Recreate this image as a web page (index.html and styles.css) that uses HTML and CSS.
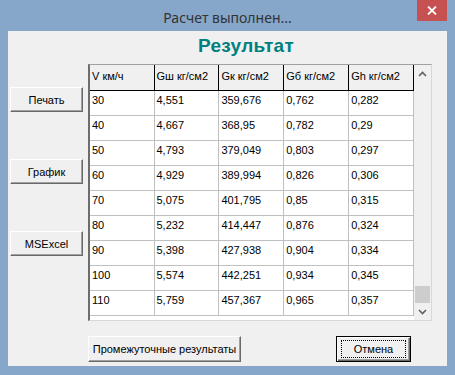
FILE: index.html
```html
<!DOCTYPE html>
<html lang="ru">

<head>
    <meta charset="UTF-8">
    <meta name="viewport" content="width=device-width, initial-scale=1.0">
    <title>Расчет выполнен...</title>
    <link rel="stylesheet" href="styles.css">
</head>

<body>
    <div class="window">
        <div class="titlebar">
            <span></span>
            <span class="title">Расчет выполнен...</span>
            <div class="close">
                <svg width="10" height="9" viewBox="0 0 10 9">
                    <path d="M1 0.5 L9 8.5 M9 0.5 L1 8.5" stroke="#fff" stroke-width="1.8" fill="none"/>
                </svg>
            </div>
        </div>

        <div class="client">
            <div class="heading">Результат</div>

            <div class="main">
                <div class="side-buttons">
                    <div class="btn side">Печать</div>
                    <div class="btn side">График</div>
                    <div class="btn side">MSExcel</div>
                </div>

                <div class="grid-box">
                    <table class="grid">
                        <thead>
                            <tr>
                                <th class="c1">V км/ч</th>
                                <th>Gш кг/см2</th>
                                <th>Gк кг/см2</th>
                                <th>Gб кг/см2</th>
                                <th>Gh кг/см2</th>
                            </tr>
                        </thead>
                        <tbody>
                            <tr><td>30</td><td>4,551</td><td>359,676</td><td>0,762</td><td>0,282</td></tr>
                            <tr><td>40</td><td>4,667</td><td>368,95</td><td>0,782</td><td>0,29</td></tr>
                            <tr><td>50</td><td>4,793</td><td>379,049</td><td>0,803</td><td>0,297</td></tr>
                            <tr><td>60</td><td>4,929</td><td>389,994</td><td>0,826</td><td>0,306</td></tr>
                            <tr><td>70</td><td>5,075</td><td>401,795</td><td>0,85</td><td>0,315</td></tr>
                            <tr><td>80</td><td>5,232</td><td>414,447</td><td>0,876</td><td>0,324</td></tr>
                            <tr><td>90</td><td>5,398</td><td>427,938</td><td>0,904</td><td>0,334</td></tr>
                            <tr><td>100</td><td>5,574</td><td>442,251</td><td>0,934</td><td>0,345</td></tr>
                            <tr><td>110</td><td>5,759</td><td>457,367</td><td>0,965</td><td>0,357</td></tr>
                        </tbody>
                    </table>

                    <div class="scrollbar">
                        <div class="arrow">
                            <svg width="9" height="6" viewBox="0 0 9 6">
                                <path d="M1 5 L4.5 1.5 L8 5" stroke="#606060" stroke-width="1.6" fill="none"/>
                            </svg>
                        </div>
                        <div class="track"><div class="thumb"></div></div>
                        <div class="arrow">
                            <svg width="9" height="6" viewBox="0 0 9 6">
                                <path d="M1 1 L4.5 4.5 L8 1" stroke="#606060" stroke-width="1.6" fill="none"/>
                            </svg>
                        </div>
                    </div>
                </div>
            </div>

            <div class="footer">
                <div class="btn wide">Промежуточные результаты</div>
                <div class="btn default"><span class="focus">Отмена</span></div>
            </div>
        </div>
    </div>
</body>

</html>
```

FILE: styles.css
```css
body {
    margin: 0;
    background-color: #86a7c9;
    font-family: "Liberation Sans", Arial, sans-serif;
}

.window {
    width: 455px;
    height: 375px;
}

.titlebar {
    display: grid;
    grid-template-columns: 1fr auto 1fr;
    height: 31px;
}

.title {
    font-family: "Noto Sans", sans-serif;
    font-size: 14px;
    color: #333;
    padding-top: 8px;
}

.close {
    justify-self: end;
    margin-right: 8px;
    width: 30px;
    height: 21px;
    background-color: #c75050;
    display: flex;
    align-items: center;
    justify-content: center;
}

.client {
    margin: 0 8px;
    height: 335px;
    background-color: #f0f0f0;
}

.heading {
    height: 33px;
    box-sizing: border-box;
    padding: 4px 0 0 37px;
    text-align: center;
    font-size: 19px;
    font-weight: bold;
    color: #008080;
    letter-spacing: 0.3px;
}

.main {
    display: flex;
}

.side-buttons {
    width: 80px;
    box-sizing: border-box;
    padding: 23px 0 0 2px;
    display: flex;
    flex-direction: column;
    gap: 47px;
}

.btn {
    box-sizing: border-box;
    background-color: #f0f0f0;
    border: 1px solid;
    border-color: #fff #696969 #696969 #fff;
    box-shadow: inset -1px -1px #a0a0a0;
    font-size: 11px;
    color: #000;
    display: flex;
    align-items: center;
    justify-content: center;
}

.side {
    width: 73px;
    height: 25px;
}

.grid-box {
    display: flex;
    width: 344px;
    height: 257px;
    box-sizing: border-box;
    border-top: 1px solid #a0a0a0;
    border-left: 2px solid #6d6d6d;
    border-right: 1px solid #d8d8d8;
    border-bottom: 1px solid #d8d8d8;
    background-color: #fff;
}

.grid {
    border-collapse: collapse;
    table-layout: fixed;
    width: 324px;
    align-self: flex-start;
    font-size: 11px;
}

.grid th {
    height: 25px;
    box-sizing: border-box;
    padding: 5px 2px 0;
    background-color: #f0f0f0;
    border-right: 1px solid #000;
    border-bottom: 1px solid #000;
    font-weight: normal;
    text-align: left;
    vertical-align: top;
    white-space: nowrap;
    overflow: hidden;
}

.grid th.c1 {
    width: 64px;
}

.grid td {
    height: 25px;
    box-sizing: border-box;
    padding: 3px 2px 0;
    border-right: 1px solid #c0c0c0;
    border-bottom: 1px solid #c0c0c0;
    vertical-align: top;
}

.scrollbar {
    width: 17px;
    background-color: #f0f0f0;
    display: flex;
    flex-direction: column;
}

.arrow {
    height: 17px;
    display: flex;
    align-items: center;
    justify-content: center;
}

.track {
    flex: 1;
    display: flex;
    flex-direction: column;
    justify-content: flex-end;
}

.thumb {
    height: 17px;
    margin: 0 1px;
    background-color: #cdcdcd;
}

.footer {
    display: flex;
    padding: 15px 0 0 80px;
}

.wide {
    width: 153px;
    height: 26px;
}

.default {
    width: 75px;
    height: 26px;
    margin-left: 95px;
    border-color: #000;
    box-shadow: inset 1px 1px #fff, inset -1px -1px #696969, inset -2px -2px #a0a0a0;
}

.focus {
    width: 65px;
    height: 18px;
    border: 1px dotted #000;
    box-sizing: border-box;
    display: flex;
    align-items: center;
    justify-content: center;
}
```
